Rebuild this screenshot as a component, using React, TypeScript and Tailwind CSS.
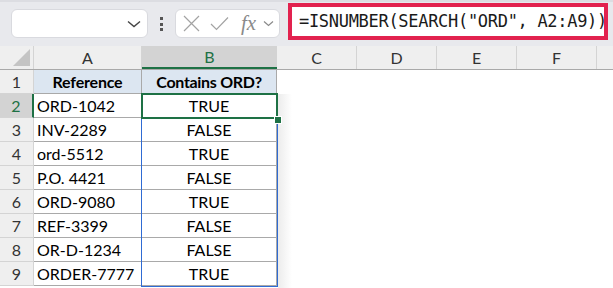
import React from "react";

const rows: [string, string][] = [
  ["ORD-1042", "TRUE"],
  ["INV-2289", "FALSE"],
  ["ord-5512", "TRUE"],
  ["P.O. 4421", "FALSE"],
  ["ORD-9080", "TRUE"],
  ["REF-3399", "FALSE"],
  ["OR-D-1234", "FALSE"],
  ["ORDER-7777", "TRUE"],
];

const cols = ["C", "D", "E", "F"];

export default function App() {
  const grid = { fontFamily: "Lato, 'Noto Sans', sans-serif" };
  return (
    <div className="w-[613px] h-[288px] overflow-hidden bg-white relative" style={grid}>
      {/* formula bar */}
      <div className="h-[46px] bg-[#e8e9ed] border-t-2 border-[#dcdde2] flex items-start">
        <div className="ml-[11px] mt-[7px] w-[137px] h-[29px] bg-white rounded-[6px] border border-[#d9dadf] flex items-center justify-end pr-[6px]">
          <svg width="14" height="8" viewBox="0 0 14 8">
            <path d="M1 1.5 L7 6.5 L13 1.5" fill="none" stroke="#444" strokeWidth="1.4" />
          </svg>
        </div>
        <div className="ml-[12px] mt-[15px] flex flex-col gap-[2.5px]">
          <div className="w-[3px] h-[3px] bg-[#555]" />
          <div className="w-[3px] h-[3px] bg-[#555]" />
          <div className="w-[3px] h-[3px] bg-[#555]" />
        </div>
        <div className="ml-[12px] mt-[7px] w-[105px] h-[29px] bg-white rounded-[6px] border border-[#d9dadf] flex items-center">
          <svg className="ml-[7px]" width="17" height="17" viewBox="0 0 17 17">
            <path d="M1 1 L16 16 M16 1 L1 16" stroke="#a3a3a3" strokeWidth="1.2" fill="none" />
          </svg>
          <svg className="ml-[10px]" width="19" height="15" viewBox="0 0 19 15">
            <path d="M1 8 L6.5 13.5 L18 1.5" stroke="#a3a3a3" strokeWidth="1.2" fill="none" />
          </svg>
          <span
            className="ml-[12px] text-[21px] italic text-[#8a8a8a] leading-none"
            style={{ fontFamily: "'Liberation Serif', serif" }}
          >
            fx
          </span>
          <svg className="ml-[7px]" width="11" height="7" viewBox="0 0 11 7">
            <path d="M1 1.5 L5.5 5.5 L10 1.5" fill="none" stroke="#8a8a8a" strokeWidth="1.2" />
          </svg>
        </div>
        <div className="ml-[8px] mt-[1px] w-[320px] h-[37px] bg-white border-[4px] border-[#e2224f] flex items-center pl-[7px] overflow-hidden whitespace-nowrap">
          <span
            className="text-[17px] tracking-[-0.3px] text-[#1a1a1a] leading-none"
            style={{ fontFamily: "'DejaVu Sans Mono', monospace" }}
          >
            =ISNUMBER(SEARCH("ORD", A2:A9))
          </span>
        </div>
      </div>

      {/* column headers */}
      <div className="flex h-[24px] bg-[#efefef] border-b border-[#a9a9a9] text-[16px] text-[#333]">
        <div className="w-[34px] shrink-0 border-r border-[#d4d4d4] flex items-end justify-end pr-[3px] pb-[3px]">
          <svg width="17" height="17" viewBox="0 0 17 17">
            <path d="M17 0 L17 17 L0 17 Z" fill="#c4c4c4" />
          </svg>
        </div>
        <div className="w-[108px] shrink-0 border-r border-[#d4d4d4] flex items-center justify-center">A</div>
        <div className="w-[135px] shrink-0 bg-[#d3d3d3] border-b-2 border-[#1e7145] text-[#1e7145] flex items-center justify-center">
          B
        </div>
        {cols.map((c) => (
          <div key={c} className="w-[80px] shrink-0 border-r border-[#d4d4d4] flex items-center justify-center">
            {c}
          </div>
        ))}
        <div className="flex-1" />
      </div>

      {/* body */}
      <div className="flex flex-col text-[16px] text-black">
        <div className="flex h-[24px]">
          <div className="w-[34px] shrink-0 bg-[#efefef] border-r border-b border-[#d4d4d4] flex items-center justify-center text-[#333]">
            1
          </div>
          <div className="w-[108px] shrink-0 bg-[#dce6f1] border-r border-b border-[#a9a9a9] flex items-center justify-center font-bold tracking-[-0.2px]">
            Reference
          </div>
          <div className="w-[135px] shrink-0 bg-[#dce6f1] border-r border-b border-[#a9a9a9] flex items-center justify-center font-bold tracking-[-0.3px]">
            Contains ORD?
          </div>
          <div className="flex-1" />
        </div>
        {rows.map(([a, b], i) => (
          <div key={i} className="flex h-[24px]">
            <div
              className={
                i === 0
                  ? "w-[34px] shrink-0 bg-[#d3d3d3] border-r-2 border-r-[#1e7145] border-b border-b-[#d4d4d4] flex items-center justify-center text-[#1e7145]"
                  : "w-[34px] shrink-0 bg-[#efefef] border-r border-b border-[#d4d4d4] flex items-center justify-center text-[#333]"
              }
            >
              {i + 2}
            </div>
            <div className="w-[108px] shrink-0 border-r border-b border-[#a9a9a9] flex items-center pl-[3px]">
              {a}
            </div>
            <div className="w-[135px] shrink-0 border-r border-b border-[#a9a9a9] flex items-center justify-center">
              {b}
            </div>
            <div className="flex-1" />
          </div>
        ))}
      </div>

      {/* shadow right of spill range */}
      <div className="absolute left-[278px] top-[94px] w-[14px] h-[194px] bg-gradient-to-r from-[#ececec] to-white" />
      {/* spill range border */}
      <div className="absolute left-[141px] top-[93px] w-[137px] h-[194px] border border-[#2f6bd3]" />
      {/* active cell */}
      <div className="absolute left-[141px] top-[93px] w-[137px] h-[26px] border-2 border-[#1e7145]" />
      <div className="absolute left-[274px] top-[116px] w-[6px] h-[6px] bg-[#1e7145] border border-white box-content" />
    </div>
  );
}
